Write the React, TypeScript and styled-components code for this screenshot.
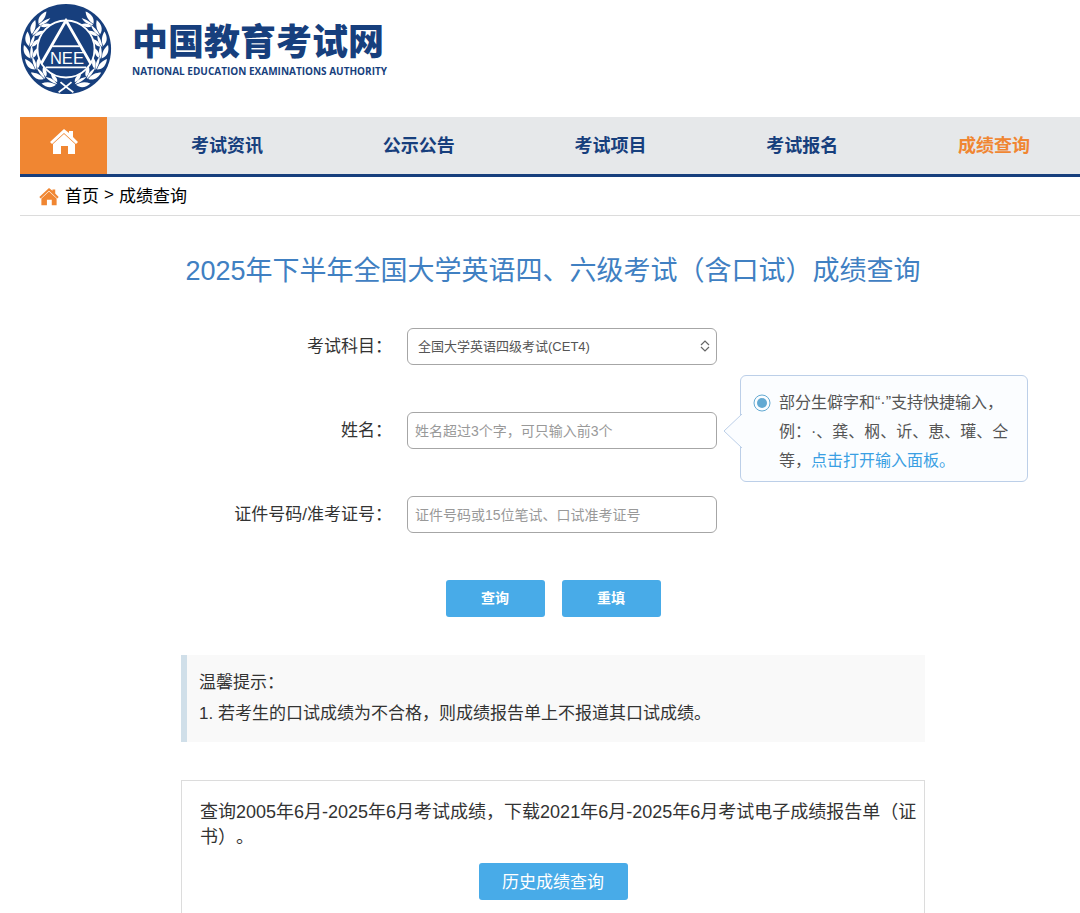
import React from "react";
import styled, { createGlobalStyle } from "styled-components";

const Global = createGlobalStyle`
  *, *::before, *::after { box-sizing: border-box; }
  body { margin: 0; background: #fff; color: #333; font-family: "Liberation Sans", "Noto Sans CJK SC", sans-serif; font-size: 17px; text-spacing-trim: space-all; }
  button, input, select { font-family: inherit; }
`;

const Page = styled.div`
  padding-left: 20px;
  overflow: hidden;
`;
const Header = styled.header`
  display: flex;
  align-items: center;
  gap: 20px;
  height: 117px;
  padding-bottom: 19px;
`;
const Emblem = styled.svg`
  width: 92px;
  height: 92px;
  flex: none;
`;
const Brand = styled.div`
  display: flex;
  flex-direction: column;
  color: #173f7d;
`;
const BrandName = styled.strong`
  font-size: 36px;
  line-height: 44px;
  font-weight: 900;
`;
const BrandSub = styled.span`
  font-family: "Open Sans", sans-serif;
  font-size: 10px;
  line-height: 12px;
  font-weight: 700;
`;
const Nav = styled.nav`
  display: flex;
  height: 60px;
  background: #e6e8ea;
  border-bottom: 3px solid #173f7d;
`;
const HomeLink = styled.a`
  display: flex;
  flex: none;
  align-items: center;
  justify-content: center;
  width: 87px;
  padding-bottom: 7px;
  background: #f08632;
  color: #fff;
`;
const NavItems = styled.div`
  display: flex;
  flex: 1;
  margin: 0 -10px 0 24px;
`;
const NavLink = styled.a<{ $active?: boolean }>`
  flex: 1;
  text-align: center;
  font-size: 18px;
  line-height: 58px;
  font-weight: 700;
  text-decoration: none;
  color: ${(p) => (p.$active ? "#f08632" : "#173f7d")};
`;
const Crumbs = styled.div`
  display: flex;
  align-items: center;
  gap: 5px;
  height: 39px;
  padding: 0 0 3px 18px;
  border-bottom: 1px solid #dcdcdc;
  color: #000;
  svg { color: #f08632; margin-top: 5px; }
  a { color: inherit; text-decoration: none; }
`;
const Main = styled.main`
  max-width: 750px;
  margin: 0 auto;
  padding-left: 6px;
`;
const Title = styled.h1`
  margin: 35px 0 37px;
  text-align: center;
  font-size: 27px;
  line-height: 40px;
  font-weight: 400;
  color: #4080c2;
`;
const Form = styled.form`
  display: flex;
  flex-direction: column;
  gap: 47px;
`;
const Field = styled.div`
  display: grid;
  grid-template-columns: 211px 310px;
  column-gap: 15px;
  align-items: center;
  position: relative;
`;
const Label = styled.label`
  text-align: right;
  line-height: 37px;
`;
const control = `
  width: 100%;
  height: 37px;
  border: 1px solid #a6a6a6;
  border-radius: 6px;
  background: #fff;
`;
const TextInput = styled.input`
  ${control}
  padding: 0 7px;
  font-size: 14px;
  &::placeholder { color: #999; opacity: 1; }
`;
const SelectWrap = styled.div`
  position: relative;
  svg { position: absolute; right: 7px; top: 12px; pointer-events: none; }
`;
const Select = styled.select`
  ${control}
  appearance: none;
  padding: 0 10px;
  font-size: 13px;
  color: #555;
`;
const Tip = styled.aside`
  position: absolute;
  left: 559px;
  top: -37px;
  width: 288px;
  padding: 12px 8px 6px 38px;
  border: 1px solid #bccfe8;
  border-radius: 6px;
  background: #fbfdff;
  color: #555;
  font-size: 16px;
  line-height: 29px;
  white-space: nowrap;
  a { color: #3a9fe3; text-decoration: none; }
`;
const TipArrow = styled.svg`
  position: absolute;
  left: -18px;
  top: 37px;
`;
const TipDot = styled.svg`
  position: absolute;
  left: 12px;
  top: 18px;
`;
const Actions = styled.div`
  display: flex;
  justify-content: center;
  gap: 17px;
  margin-bottom: 38px;
`;
const Button = styled.button<{ $large?: boolean }>`
  width: ${(p) => (p.$large ? 149 : 99)}px;
  height: 37px;
  padding: 0 0 3px;
  border: 0;
  border-radius: 3px;
  background: #48abe8;
  color: #fff;
  font-size: ${(p) => (p.$large ? 17 : 14)}px;
  font-weight: ${(p) => (p.$large ? 400 : 700)};
`;
const Notice = styled.section`
  margin-bottom: 38px;
  padding: 12px 12px 13px;
  border-left: 6px solid #d0dfe9;
  background: #f9f9f9;
  line-height: 31px;
  p { margin: 0; }
`;
const History = styled.section`
  display: flex;
  flex-direction: column;
  align-items: center;
  gap: 13px;
  padding: 19px 18px 40px;
  border: 1px solid #dcdcdc;
  p { align-self: stretch; margin: 0 -14px 0 0; font-size: 18px; line-height: 25px; }
`;

const House = ({ w, h }: { w: number; h: number }) => (
  <svg width={w} height={h} viewBox="0 0 28 26" fill="currentColor" aria-hidden="true">
    <path d="M14 0 L19 4 V2 H23 V8 L28 13 L26 15 L14 4 L2 15 L0 13 Z" />
    <path d="M14 5 L25 15 V25 H18 V17 H11 V25 H3 V15 Z" />
  </svg>
);

const leafAngles = [24, 45, 65, 84, 103, 122, 141];
const Branch = () => (
  <g>
    {leafAngles.map((t) => {
      const r = (t * Math.PI) / 180;
      const x = 50 - 39 * Math.sin(r);
      const y = 50 + 39 * Math.cos(r);
      return (
        <g key={t} transform={`translate(${x.toFixed(1)} ${y.toFixed(1)}) rotate(${t - 90})`}>
          <path d="M-1 6 C-7 3 -8 -3 -6 -9 C-2 -5 0 0 -1 6Z" />
          <path d="M0 7 C-1 0 1 -5 2 -8 C4 -3 3 3 0 7Z" />
          <path d="M2 6 C2 1 4 -2 8 -4 C8 1 6 5 2 6Z" />
        </g>
      );
    })}
  </g>
);

const options = ["全国大学英语四级考试(CET4)", "全国大学英语六级考试(CET6)"];
const navItems = ["考试资讯", "公示公告", "考试项目", "考试报名", "成绩查询"];

export default function App() {
  return (
    <Page>
      <Global />
      <Header>
        <Emblem viewBox="0 0 100 100" role="img" aria-label="NEEA">
          <circle cx="50" cy="50" r="49" fill="#173f7d" />
          <g fill="#fff">
            <Branch />
            <g transform="translate(100 0) scale(-1 1)"><Branch /></g>
          </g>
          <circle cx="50" cy="50" r="31" fill="#173f7d" stroke="#fff" strokeWidth="2" />
          <g fill="none" stroke="#fff">
            <path d="M23 66 L50 19 L77 66" strokeWidth="3" />
            <path d="M35 47H65" strokeWidth="2" />
            <path d="M28 70H72" strokeWidth="2" />
            <path d="M42 97Q48 93 56 86M58 97Q52 93 44 86" strokeWidth="2" />
          </g>
          <text x="51" y="66" textAnchor="middle" fontSize="18" fontFamily="Liberation Sans, sans-serif" fill="#fff">NEE</text>
        </Emblem>
        <Brand>
          <BrandName>中国教育考试网</BrandName>
          <BrandSub>NATIONAL EDUCATION EXAMINATIONS AUTHORITY</BrandSub>
        </Brand>
      </Header>
      <Nav>
        <HomeLink href="#" aria-label="首页"><House w={28} h={26} /></HomeLink>
        <NavItems>
          {navItems.map((n, i) => (
            <NavLink key={n} href="#" $active={i === 4}>{n}</NavLink>
          ))}
        </NavItems>
      </Nav>
      <Crumbs>
        <House w={22} h={18} />
        <a href="#">首页</a>
        <span>&gt;</span>
        <span>成绩查询</span>
      </Crumbs>
      <Main>
        <Title>2025年下半年全国大学英语四、六级考试（含口试）成绩查询</Title>
        <Form onSubmit={(e) => e.preventDefault()}>
          <Field>
            <Label htmlFor="subject">考试科目：</Label>
            <SelectWrap>
              <Select id="subject">
                {options.map((o) => <option key={o}>{o}</option>)}
              </Select>
              <svg width="10" height="12" viewBox="0 0 10 12" fill="none" stroke="#666" strokeWidth="1.2">
                <path d="M1 5L5 1L9 5M1 7L5 11L9 7" />
              </svg>
            </SelectWrap>
          </Field>
          <Field>
            <Label htmlFor="name">姓名：</Label>
            <TextInput id="name" placeholder="姓名超过3个字，可只输入前3个" />
            <Tip>
              <TipArrow width="19" height="36" viewBox="0 0 19 36">
                <path d="M19 1L1 18L19 35" fill="#fbfdff" stroke="#bccfe8" />
              </TipArrow>
              <TipDot width="18" height="18" viewBox="0 0 18 18">
                <circle cx="9" cy="9" r="8" fill="none" stroke="#62a9d2" />
                <circle cx="9" cy="9" r="5" fill="#62a9d2" />
              </TipDot>
              部分生僻字和“·”支持快捷输入，<br />
              例：·、龚、㭎、䜣、恵、瓘、仝<br />
              等，<a href="#">点击打开输入面板。</a>
            </Tip>
          </Field>
          <Field>
            <Label htmlFor="idno">证件号码/准考证号：</Label>
            <TextInput id="idno" placeholder="证件号码或15位笔试、口试准考证号" />
          </Field>
          <Actions>
            <Button type="submit">查询</Button>
            <Button type="reset">重填</Button>
          </Actions>
        </Form>
        <Notice>
          <p>温馨提示：</p>
          <p>1. 若考生的口试成绩为不合格，则成绩报告单上不报道其口试成绩。</p>
        </Notice>
        <History>
          <p>查询2005年6月-2025年6月考试成绩，下载2021年6月-2025年6月考试电子成绩报告单（证书）。</p>
          <Button type="button" $large>历史成绩查询</Button>
        </History>
      </Main>
    </Page>
  );
}
